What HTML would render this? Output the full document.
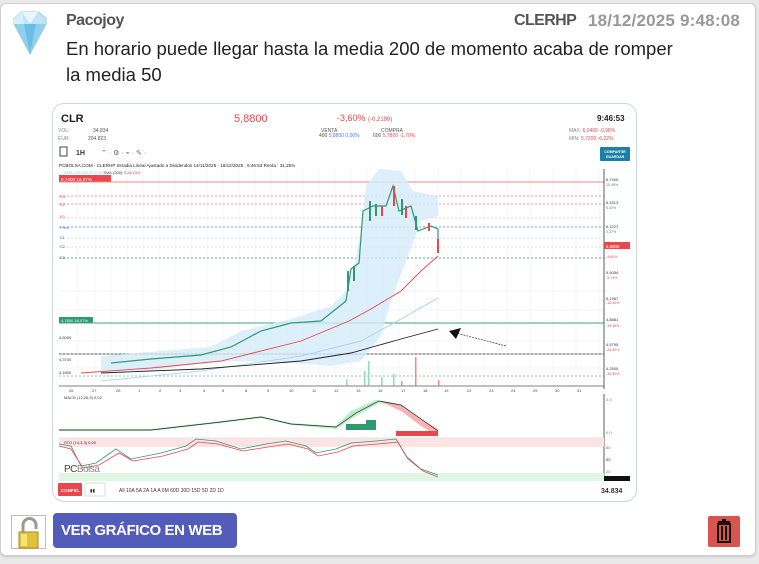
<!DOCTYPE html>
<html><head><meta charset="utf-8"><style>
*{margin:0;padding:0;box-sizing:border-box}
body{width:759px;height:564px;background:#e9e9e9;font-family:"Liberation Sans",sans-serif;position:relative;overflow:hidden}
.card{position:absolute;left:0;top:3px;width:756px;height:553px;background:#fff;border:1px solid #d0d0d0;border-radius:6px;box-shadow:0 1px 2px rgba(0,0,0,.15)}
.name{position:absolute;left:66px;top:12px;font-size:16px;font-weight:bold;color:#555;letter-spacing:-.5px}
.tick{position:absolute;left:514px;top:12px;font-size:16px;font-weight:bold;color:#555;letter-spacing:-.6px}
.date{position:absolute;left:588px;top:11px;font-size:17px;font-weight:bold;color:#999;letter-spacing:.2px;white-space:nowrap}
.msg{position:absolute;left:66px;top:36px;font-size:18.5px;color:#222;line-height:26px;width:615px;letter-spacing:0}
.chart{position:absolute;left:52px;top:103px;width:585px;height:399px;border:1px solid #cfd6dc;border-radius:12px;background:#fff;overflow:hidden}
.btn{position:absolute;left:53px;top:513px;width:184px;height:35px;background:#525cba;border-radius:4px;color:#fff;font-weight:bold;font-size:15px;line-height:35px;padding-left:8px;letter-spacing:-.4px;white-space:nowrap}
.lock{position:absolute;left:11px;top:515px;width:35px;height:34px;border:1px solid #c9b8b8}
.trash{position:absolute;left:708px;top:516px;width:32px;height:31px;background:#d9534f;border-radius:2px}
</style></head><body>
<div class="card"></div>
<svg style="position:absolute;left:10px;top:10px" width="40" height="46" viewBox="0 0 40 46">
<polygon points="4,8 12,2 28,2 36,8 36,14 20,44 4,14" fill="#bfe6f6" stroke="#9ccbe0"/>
<polygon points="4,14 36,14 20,44" fill="#8fd0ee"/>
<polygon points="12,2 20,14 28,2" fill="#e8f7fd"/>
<polygon points="4,8 12,2 14,14 4,14" fill="#d6f0fa"/>
<polygon points="14,14 20,44 26,14" fill="#6cbde3"/>
</svg>
<div class="name">Pacojoy</div>
<div class="tick">CLERHP</div>
<div class="date">18/12/2025 9:48:08</div>
<div class="msg">En horario puede llegar hasta la media 200 de momento acaba de romper la media 50</div>
<div class="chart">
<svg width="585" height="399" viewBox="52 103 585 399" style="font-family:'Liberation Sans',sans-serif">
<text x="60" y="121" font-size="11" font-weight="bold" fill="#222">CLR</text>
<text x="233" y="121" font-size="11" fill="#e8484d">5,8800</text>
<text x="336" y="120" font-size="9" fill="#e8484d">-3,60% <tspan font-size="6">(-0,2199)</tspan></text>
<text x="596" y="120" font-size="8" font-weight="bold" fill="#222">9:46:53</text>
<text x="57" y="131" font-size="5" fill="#888">VOL:</text><text x="92" y="131" font-size="5" fill="#555">34.834</text>
<text x="57" y="139" font-size="5" fill="#888">EUR:</text><text x="87" y="139" font-size="5" fill="#555">204.823</text>
<text x="320" y="131" font-size="5" fill="#555">VENTA</text><text x="380" y="131" font-size="5" fill="#555">COMPRA</text>
<text x="318" y="136" font-size="5" fill="#555">400 <tspan fill="#3b82f6">5,8800  0,00%</tspan></text>
<text x="372" y="136" font-size="5" fill="#555">600 <tspan fill="#e8484d">5,7800  -1,70%</tspan></text>
<text x="568" y="131" font-size="5" fill="#888">MAX: <tspan fill="#e8484d">6,0400 -0,98%</tspan></text>
<text x="568" y="139" font-size="5" fill="#888">MIN: <tspan fill="#e8484d">5,7200 -6,22%</tspan></text>
<rect x="59" y="146" width="7" height="9" fill="none" stroke="#444"/>
<text x="75" y="154" font-size="7" font-weight="bold" fill="#333">1H</text>
<text x="100" y="154" font-size="7" fill="#666">⌃ ·   ⚙ ·   ⌁ ·   ✎ ·</text>
<rect x="599" y="146" width="30" height="14" fill="#1c7fa6" rx="1"/>
<text x="614" y="152" font-size="3.6" fill="#fff" text-anchor="middle" font-weight="bold">COMPARTIR</text>
<text x="614" y="157" font-size="3.6" fill="#fff" text-anchor="middle" font-weight="bold">GUARDAR</text>
<text x="58" y="166" font-size="4.6" fill="#222">PCBOLSA.COM - CLERHP Intradia Lineal Ajustado a Dividendos 14/11/2025 - 18/12/2025 , 9:46:53 Renta : 31,25%</text>
<text x="63" y="173" font-size="4" fill="#333"><tspan fill="#9ccbe0">SMA (100) BOLL (20)</tspan> SMA (200) <tspan fill="#e8484d">SMA (50)</tspan></text>
<g stroke="#eee" stroke-width=".6">
<path d="M77 168V385M94 168V385M110 168V385M126 168V385M142 168V385M158 168V385M174 168V385M190 168V385M206 168V385M222 168V385M238 168V385M254 168V385M270 168V385M286 168V385M302 168V385M318 168V385M334 168V385M350 168V385M366 168V385M382 168V385M398 168V385M414 168V385M437 168V385M460 168V385M483 168V385M506 168V385M529 168V385M552 168V385M575 168V385M598 168V385"/>
<path d="M58 290H603M58 309H603M58 340H603M58 367H603"/>
</g>
<rect x="58" y="174" width="52" height="7" fill="#e8484d"/>
<text x="60" y="180" font-size="4.6" fill="#fff">6,7400  16,07%</text>
<path d="M58 181H603" stroke="#f08a8d" stroke-width="1"/>
<g stroke-dasharray="2,2" stroke-width=".8">
<path d="M58 195H603M58 203H603" stroke="#f07b7e"/>
<path d="M58 217H603" stroke="#f5c0c2"/>
<path d="M58 226H603" stroke="#3b82f6"/>
<path d="M58 237H603M58 246H603" stroke="#c6d6f0"/>
<path d="M58 257H603" stroke="#2f8a68"/>
<path d="M58 353H603" stroke="#333"/>
<path d="M58 375H603" stroke="#5cc08f"/>
</g>
<text x="59" y="197" font-size="4" fill="#e8484d">R3</text><text x="59" y="205" font-size="4" fill="#e8484d">R2</text><text x="59" y="217" font-size="4" fill="#e8484d">R1</text>
<text x="59" y="228" font-size="4" fill="#3b82f6">Pivot</text><text x="59" y="238" font-size="4" fill="#2f8a68">S1</text><text x="59" y="247" font-size="4" fill="#2f8a68">S2</text><text x="59" y="258" font-size="4" fill="#2f8a68">S3</text>
<rect x="58" y="316" width="34" height="6" fill="#2f9a70"/><text x="60" y="321" font-size="4" fill="#fff">4,7800  16,07%</text>
<path d="M58 322H603" stroke="#3da77d" stroke-width="1"/>
<path d="M58 353H603" stroke="#555" stroke-width=".6"/>
<text x="58" y="338" font-size="4" fill="#333">4,6000</text><text x="58" y="360" font-size="4" fill="#333">4,3700</text><text x="58" y="373" font-size="4" fill="#333">4,1800</text>
<path d="M100 355 L160 350 L210 346 L240 330 L290 318 L330 305 L345 290 L352 270 L360 230 L365 185 L378 168 L400 170 L412 190 L437 195 L437 215 L420 220 L405 260 L390 300 L380 335 L360 360 L330 365 L290 362 L240 360 L200 362 L150 370 L100 372Z" fill="#d5ebf9" opacity=".8"/>
<path d="M110 362 L150 358 L200 354 L230 346 L260 330 L290 322 L320 320 L345 300 L350 268 L358 262 L362 210 L372 205 L385 205 L392 185 L398 210 L410 205 L417 230 L430 225 L437 228 L437 252" fill="none" stroke="#2f9a70" stroke-width="1.2"/>
<g fill="#2f9a70"><rect x="368" y="200" width="2" height="20"/><rect x="374" y="203" width="2" height="12"/><rect x="346" y="270" width="2" height="20"/><rect x="352" y="265" width="2" height="15"/><rect x="400" y="198" width="2" height="16"/><rect x="414" y="215" width="2" height="14"/></g>
<g fill="#e8484d"><rect x="392" y="185" width="2" height="20"/><rect x="380" y="205" width="2" height="10"/><rect x="404" y="205" width="2" height="12"/><rect x="427" y="222" width="2" height="8"/><rect x="436" y="238" width="2" height="14"/></g>
<path d="M80 372 L150 367 L220 360 L300 340 L348 320 L370 308 L400 290 L420 270 L437 255" fill="none" stroke="#e8484d" stroke-width=".9"/>
<path d="M100 380 L200 370 L300 355 L360 340 L400 318 L437 297" fill="none" stroke="#9cd0ee" stroke-width=".8"/>
<path d="M100 372 L200 368 L300 360 L350 352 L400 338 L437 328" fill="none" stroke="#222" stroke-width=".9"/>
<path d="M505 345 L455 332" stroke="#333" stroke-width=".7" stroke-dasharray="2,1"/>
<polygon points="448,330 460,327 455,338" fill="#111"/>
<g fill="#8fdcb0"><rect x="363" y="370" width="1.5" height="15"/><rect x="367" y="360" width="1.5" height="25"/><rect x="380" y="376" width="1.5" height="9"/><rect x="392" y="373" width="1.5" height="12"/><rect x="345" y="378" width="1.5" height="7"/></g>
<g fill="#f08a8d"><rect x="414" y="356" width="1.5" height="29"/><rect x="437" y="379" width="1.5" height="6"/><rect x="400" y="380" width="1.5" height="5"/></g>
<path d="M58 385H603" stroke="#999" stroke-width="1.2"/>
<path d="M603 168V388" stroke="#333" stroke-width=".8"/>
<g font-size="4" fill="#333"><text x="605" y="180">6,7400</text><text x="605" y="203">6,4313</text><text x="605" y="227">6,1227</text><text x="605" y="273">5,5054</text><text x="605" y="299">5,1967</text><text x="605" y="320">4,8881</text><text x="605" y="345">4,5795</text><text x="605" y="369">4,2500</text></g>
<g font-size="3.6"><text x="605" y="185" fill="#2f9a70">10,49%</text><text x="605" y="208" fill="#2f9a70">5,40%</text><text x="605" y="232" fill="#2f9a70">0,37%</text><text x="605" y="257" fill="#e8484d">-4,60%</text><text x="605" y="278" fill="#e8484d">-9,74%</text><text x="605" y="303" fill="#e8484d">-14,30%</text><text x="605" y="326" fill="#e8484d">-19,36%</text><text x="605" y="350" fill="#e8484d">-24,32%</text><text x="605" y="374" fill="#e8484d">-30,30%</text></g>
<rect x="603" y="241" width="26" height="7" fill="#e8484d"/><text x="605" y="247" font-size="4.4" fill="#fff">5,8800</text>
<g font-size="4" fill="#444"><text x="68" y="391">26</text><text x="91" y="391">27</text><text x="115" y="391">28</text><text x="137" y="391">1</text><text x="158" y="391">2</text><text x="178" y="391">3</text><text x="202" y="391">4</text><text x="221" y="391">5</text><text x="244" y="391">8</text><text x="266" y="391">9</text><text x="288" y="391">10</text><text x="311" y="391">11</text><text x="333" y="391">12</text><text x="355" y="391">15</text><text x="377" y="391">16</text><text x="400" y="391">17</text><text x="422" y="391">18</text><text x="443" y="391">19</text><text x="466" y="391">22</text><text x="488" y="391">23</text><text x="510" y="391">24</text><text x="532" y="391">29</text><text x="554" y="391">30</text><text x="576" y="391">31</text></g>
<text x="63" y="398" font-size="4" fill="#333">MACD (12,26,9)  0,02</text>
<path d="M58 428 L150 428 L220 420 L260 415 L290 422 L335 425 L350 410 L375 399 L395 402 L420 418 L437 428 L437 434 L420 423 L395 405 L378 402 L355 415 L335 428 L290 424 L260 417 L220 422 L150 430 L58 430Z" fill="#b8efc4"/>
<path d="M378 400 L400 404 L420 418 L437 428 L437 436 L420 425 L400 410Z" fill="#f6b3b4"/>
<path d="M58 429 L150 429 L220 421 L260 416 L290 423 L335 426 L355 412 L378 400 L400 404 L420 418 L437 430" fill="none" stroke="#222" stroke-width=".7"/>
<g fill="#2f9a70"><rect x="345" y="423" width="20" height="6"/><rect x="365" y="419" width="10" height="10"/></g>
<g fill="#e8484d"><rect x="395" y="430" width="42" height="5"/></g>
<path d="M603 393V480" stroke="#333" stroke-width=".8"/>
<text x="605" y="400" font-size="4" fill="#e8484d">0,3</text><text x="605" y="433" font-size="4" fill="#2f9a70">0,0</text>
<path d="M58 437H603" stroke="#ddd"/>
<rect x="58" y="437" width="545" height="9" fill="#fde3e3"/>
<rect x="58" y="472" width="545" height="8" fill="#dff7e2"/>
<text x="63" y="443" font-size="4" fill="#333">STO (14,3,3)  0,00</text>
<path d="M58 443 L70 445 L80 465 L95 462 L115 448 L130 458 L160 452 L185 445 L195 438 L215 440 L240 448 L265 443 L285 440 L305 445 L315 452 L335 448 L350 442 L375 440 L395 438 L405 455 L420 468 L437 474" fill="none" stroke="#2f9a70" stroke-width=".8"/>
<path d="M58 445 L70 448 L82 467 L98 464 L118 452 L132 460 L162 455 L187 448 L197 441 L217 443 L242 450 L267 446 L287 443 L307 448 L317 455 L337 451 L352 445 L377 443 L397 441 L407 458 L422 470 L437 476" fill="none" stroke="#e8484d" stroke-width=".8"/>
<text x="63" y="471" font-size="10" fill="#444" letter-spacing="-.5">PC<tspan fill="#888">Bolsa</tspan></text>
<text x="605" y="448" font-size="4" fill="#e8484d">80</text><text x="605" y="460" font-size="4" fill="#333">50</text><text x="605" y="472" font-size="4" fill="#2f9a70">20</text>
<rect x="603" y="475" width="26" height="5" fill="#111"/>
<rect x="57" y="482" width="24" height="13" fill="#e8484d" rx="1"/><text x="60" y="491" font-size="4.5" fill="#fff" font-weight="bold">CONFIG.</text>
<rect x="84" y="482" width="20" height="13" fill="#fff" stroke="#ddd"/><text x="89" y="491" font-size="4.5" fill="#333">▮▮</text>
<text x="118" y="491" font-size="5" fill="#333">All  10A  5A  2A  1A   A   6M  60D  30D  15D  5D  2D  1D</text>
<text x="600" y="492" font-size="7" font-weight="bold" fill="#333">34.834</text>
</svg>
</div>
<div class="lock"><svg width="35" height="34" viewBox="0 0 35 34"><path d="M11 17V9a6.5 6.5 0 0 1 13 0v4" fill="none" stroke="#999" stroke-width="3"/><rect x="7" y="16" width="19" height="16" fill="#e3c23a" stroke="#a8881a"/><rect x="9" y="18" width="6" height="12" fill="#f5e27a"/></svg></div>
<div class="btn">VER GRÁFICO EN WEB</div>
<div class="trash"><svg width="32" height="31" viewBox="0 0 32 31"><rect x="10" y="5" width="12" height="2" fill="#111"/><rect x="14" y="3" width="4" height="2" fill="#111"/><rect x="10" y="8" width="12" height="18" fill="none" stroke="#111" stroke-width="2"/><path d="M14 10V24M18 10V24" stroke="#111" stroke-width="2"/></svg></div>
</body></html>
